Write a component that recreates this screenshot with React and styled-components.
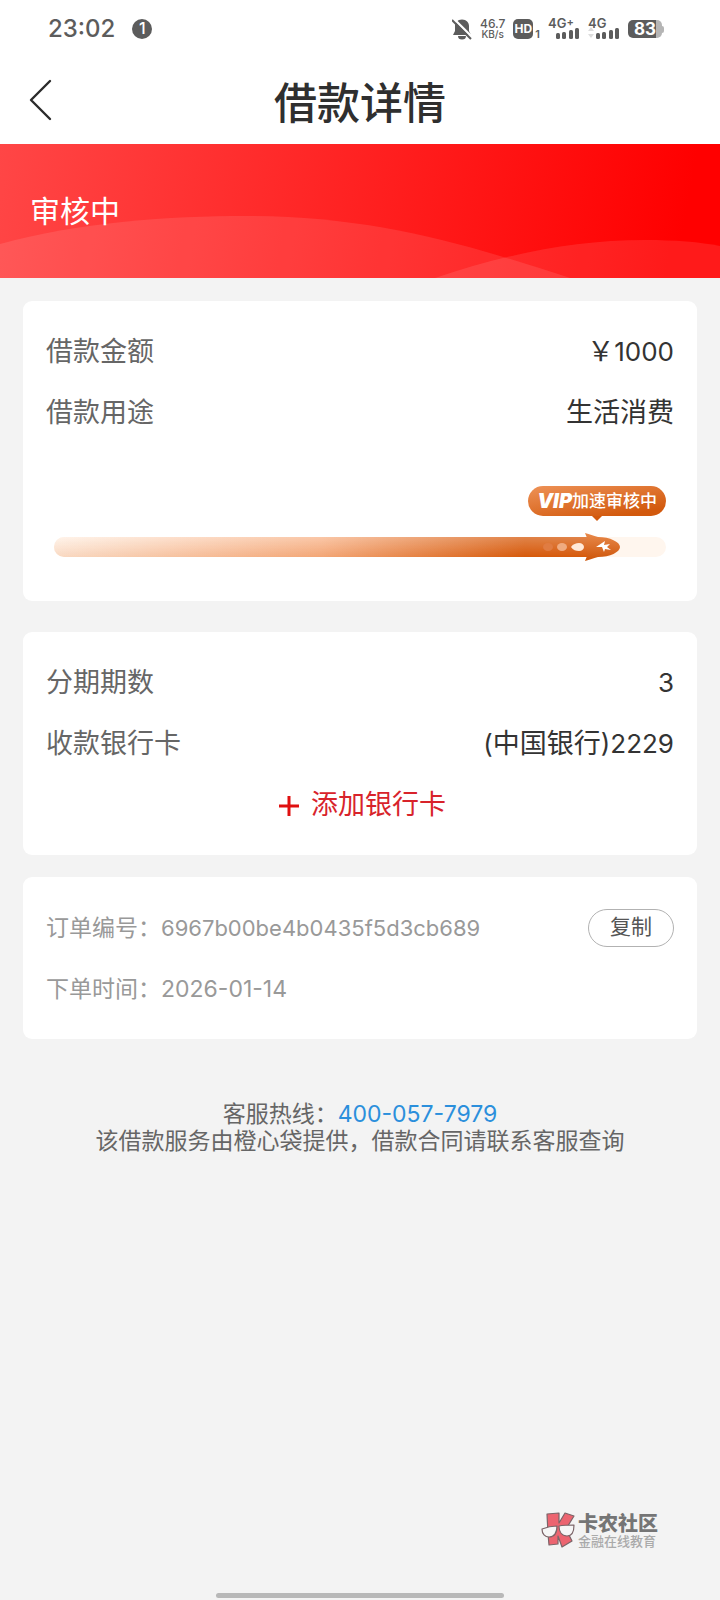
import React from 'react'
import styled, { createGlobalStyle } from 'styled-components'

const App = () => {
  return (
    <>
      <GlobalStyle />
      <Page>
        <StatusBar />
        <Header>
          <BackButton type="button" aria-label="返回">
            <svg width="24" height="44" viewBox="0 0 24 44">
              <path d="M21 3 L2 22 L21 41" fill="none" stroke="#2b2b2b" strokeWidth="2.4" strokeLinecap="round" strokeLinejoin="round" />
            </svg>
          </BackButton>
          <Title>借款详情</Title>
        </Header>
        <Banner>
          <BannerWaves />
          <BannerText>审核中</BannerText>
        </Banner>
        <Main>
          <Card>
            <Row>
              <Label>借款金额</Label>
              <Value>￥<Num>1000</Num></Value>
            </Row>
            <Row>
              <Label>借款用途</Label>
              <Value>生活消费</Value>
            </Row>
            <ReviewProgress percent={93} />
          </Card>
          <Card $gap={31}>
            <Row>
              <Label>分期期数</Label>
              <Value><Num>3</Num></Value>
            </Row>
            <Row>
              <Label>收款银行卡</Label>
              <Value><Num>(</Num>中国银行<Num>)2229</Num></Value>
            </Row>
            <AddCard type="button">
              <svg width="22" height="22" viewBox="0 0 22 22">
                <path d="M11 1V21M1 11H21" stroke="#e01010" strokeWidth="3" />
              </svg>
              添加银行卡
            </AddCard>
          </Card>
          <Card $gap={22}>
            <Row>
              <Meta>订单编号：<OrderNo>6967b00be4b0435f5d3cb689</OrderNo></Meta>
              <CopyButton type="button">复制</CopyButton>
            </Row>
            <Row>
              <Meta>下单时间：2026-01-14</Meta>
            </Row>
          </Card>
          <Service>
            <p>客服热线：<Phone href="tel:400-057-7979">400-057-7979</Phone></p>
            <p>该借款服务由橙心袋提供，借款合同请联系客服查询</p>
          </Service>
        </Main>
        <Watermark>
          <WatermarkLogo />
          <div>
            <Brand>卡农社区</Brand>
            <Slogan>金融在线教育</Slogan>
          </div>
        </Watermark>
        <HomeIndicator />
      </Page>
    </>
  )
}

export default App

const StatusBar = () => (
  <Status>
    <Clock>23:02</Clock>
    <Notice>1</Notice>
    <StatusIcons>
      <svg width="20" height="22" viewBox="0 0 20 22">
        <path d="M10 1.500c4.500 0 7 3 7 6.500v5l2 4H1l2-4V8c0-3.500 2.500-6.500 7-6.500z" fill="#5c5c5c" />
        <path d="M6 18h8a4 3.500 0 0 1-8 0z" fill="#5c5c5c" />
        <path d="M2 1L20 19" stroke="#fff" strokeWidth="2.400" />
        <path d="M0 2L19 21" stroke="#5c5c5c" strokeWidth="2" />
      </svg>
      <Speed>
        <span>46.7</span>
        <small>KB/s</small>
      </Speed>
      <Hd>
        <b>HD</b>
        <span>1</span>
      </Hd>
      <Signal label="4G" plus />
      <Signal label="4G" idle />
      <Battery>
        <b>83</b>
      </Battery>
    </StatusIcons>
  </Status>
)

const Signal = ({ label, plus, idle }) => (
  <SignalBox>
    <span>{label}{plus && <sup>+</sup>}</span>
    <svg width="32" height="12" viewBox="0 0 32 12">
      {idle && <path d="M3 0l3 4H0zM3 11l3-4H0z" fill="#dcdcdc" />}
      <g fill="#5c5c5c">
        <rect x="8" y="6" width="4" height="6" rx="1.500" />
        <rect x="14" y="5" width="4" height="7" rx="1.500" />
        <rect x="21" y="3" width="4" height="9" rx="1.500" />
        <rect x="27" y="1" width="4" height="11" rx="1.500" />
      </g>
    </svg>
  </SignalBox>
)

const BannerWaves = () => (
  <Waves viewBox="0 0 720 134" preserveAspectRatio="none" aria-hidden="true">
    <path d="M0 100C80 78 170 72 245 72C370 72 460 98 570 134H0z" fill="#fff" fillOpacity="0.1" />
    <path d="M435 134C500 112 570 96 645 96C675 96 700 98 720 102V134z" fill="#fff" fillOpacity="0.1" />
  </Waves>
)

const ReviewProgress = ({ percent }) => (
  <Progress>
    <Bubble>
      <Vip>VIP</Vip>加速审核中
    </Bubble>
    <Track>
      <Fill style={{ width: `${percent}%` }}>
        <svg width="80" height="30" viewBox="0 0 80 30">
          <defs>
            <linearGradient id="rocket" x1="0" y1="0" x2="0" y2="1">
              <stop offset="0" stopColor="#e98a4c" />
              <stop offset="1" stopColor="#cd5408" />
            </linearGradient>
          </defs>
          <ellipse cx="5" cy="15" rx="5" ry="4" fill="#e07c42" />
          <ellipse cx="19" cy="15" rx="5" ry="4" fill="#efab80" />
          <path d="M28 15c2-3 5-4 8-4 3 0 5 2 5 4s-2 4-5 4c-3 0-6-1-8-4z" fill="#ffe9d8" />
          <path d="M42 1C47 2 50 4 55 5C67 5 77 10 77 15C77 20 67 25 55 25C50 26 47 28 42 29L44 24V6z" fill="url(#rocket)" />
          <path d="M53 15L62 9L61 13L67 12L64 15L68 18L62 17L61 20L59 15z" fill="#fff" />
        </svg>
      </Fill>
    </Track>
  </Progress>
)

const WatermarkLogo = () => (
  <svg width="34" height="36" viewBox="0 0 34 36">
    <g stroke="#7b6468" strokeWidth="1.200" strokeLinejoin="round">
      <path d="M6 2L18 1L18 11L24 1L33 4L25 17L31 29L21 35L17 24L17 32L8 33L7 22z" fill="#ec6470" />
      <path d="M1 17C6 15 10 14 16 14C16 21 13 25 8 25C4 25 1 22 1 17z" fill="#f6f6f6" />
      <path d="M18 14C23 13 28 13 33 13C33 20 31 24 26 24C21 24 18 20 18 14z" fill="#f6f6f6" />
    </g>
  </svg>
)

const GlobalStyle = createGlobalStyle`
  * {
    box-sizing: border-box;
  }
  body {
    margin: 0;
    background: #f3f3f3;
    font-family: Inter, "Noto Sans CJK SC", sans-serif;
    line-height: 1.2;
  }
  p, h1 {
    margin: 0;
  }
  button {
    font-family: inherit;
    line-height: inherit;
    cursor: pointer;
  }
`
const Page = styled.div`
  display: flex;
  flex-direction: column;
  min-height: 100vh;
`
const Status = styled.div`
  display: flex;
  align-items: center;
  height: 58px;
  padding: 0 56px 0 48px;
  background: #fff;
  color: #5c5c5c;
`
const Clock = styled.span`
  font-size: 24px;
  font-weight: 500;
`
const Notice = styled.span`
  display: flex;
  justify-content: center;
  align-items: center;
  width: 20px;
  height: 20px;
  margin-left: 17px;
  border-radius: 50%;
  background: #5c5c5c;
  color: #fff;
  font-size: 16px;
  font-weight: 500;
`
const StatusIcons = styled.div`
  display: flex;
  align-items: center;
  gap: 8px;
  margin-left: auto;
`
const Speed = styled.div`
  display: flex;
  flex-direction: column;
  align-items: center;
  font-size: 12px;
  font-weight: 500;
  line-height: 11px;

  small {
    font-size: 10px;
  }
`
const Hd = styled.div`
  display: flex;
  align-items: flex-end;
  gap: 2px;

  b {
    width: 20px;
    border-radius: 5px;
    background: #5c5c5c;
    color: #fff;
    font-size: 12px;
    line-height: 20px;
    text-align: center;
  }
  span {
    font-size: 11px;
    font-weight: 600;
    line-height: 10px;
  }
`
const SignalBox = styled.div`
  display: flex;
  flex-direction: column;
  height: 20px;
  font-size: 13px;
  font-weight: 600;
  line-height: 8px;

  sup {
    font-size: 11px;
    line-height: 0;
    vertical-align: 2px;
  }
`
const Battery = styled.div`
  display: flex;
  align-items: center;

  b {
    width: 34px;
    border-radius: 5px;
    background: linear-gradient(90deg, #5c5c5c 83%, #b5b5b5 83%);
    color: #fff;
    font-size: 17px;
    line-height: 18px;
    text-align: center;
  }
  &::after {
    content: '';
    width: 2px;
    height: 7px;
    border-radius: 0 2px 2px 0;
    background: #b5b5b5;
  }
`
const Header = styled.header`
  display: grid;
  grid-template-columns: 56px 1fr 56px;
  align-items: center;
  height: 86px;
  background: #fff;
`
const BackButton = styled.button`
  display: flex;
  justify-content: flex-end;
  padding: 0 3px 2px;
  border: none;
  background: none;
`
const Title = styled.h1`
  padding-top: 6px;
  color: #2f2f2f;
  font-size: 43px;
  font-weight: 500;
  text-align: center;
`
const Banner = styled.section`
  position: relative;
  display: flex;
  align-items: center;
  height: 134px;
  padding: 0 30px;
  background: linear-gradient(100deg, #ff4646, #ff0000 94%);
`
const Waves = styled.svg`
  position: absolute;
  inset: 0;
  width: 100%;
  height: 100%;
`
const BannerText = styled.p`
  position: relative;
  color: #fff;
  font-size: 30px;
`
const Main = styled.main`
  padding: 23px 23px 0;
`
const Card = styled.section`
  margin-top: ${({ $gap }) => $gap || 0}px;
  padding: 20px 23px;
  border-radius: 9px;
  background: #fff;
`
const Row = styled.div`
  display: flex;
  justify-content: space-between;
  align-items: center;
  height: 61px;
`
const RowText = styled.span`
  padding-top: 2px;
  font-size: 27px;
`
const Label = styled(RowText)`
  color: #666;
`
const Value = styled(RowText)`
  color: #333;
`
const Num = styled.span`
  font-size: 26px;
`
const AddCard = styled.button`
  display: flex;
  justify-content: center;
  align-items: center;
  gap: 11px;
  width: 100%;
  height: 61px;
  padding: 2px 0 0 4px;
  border: none;
  background: none;
  color: #d8232b;
  font-size: 27px;
`
const Meta = styled(RowText)`
  color: #999;
  font-size: 23px;
`
const OrderNo = styled.span`
  font-size: 22px;
`
const CopyButton = styled.button`
  width: 86px;
  height: 38px;
  padding: 0 0 2px;
  border: 1px solid #b2b2b2;
  border-radius: 19px;
  background: #fff;
  color: #555;
  font-size: 21px;
`
const Progress = styled.div`
  display: flex;
  flex-direction: column;
  gap: 21px;
  padding: 43px 8px 24px;
`
const Bubble = styled.div`
  position: relative;
  display: flex;
  align-items: center;
  align-self: flex-end;
  height: 30px;
  padding: 0 9px;
  border-radius: 15px;
  background: linear-gradient(170deg, #ee9257, #d2590d 85%);
  color: #fff;
  font-size: 17px;
  font-weight: 500;

  &::after {
    content: '';
    position: absolute;
    top: 100%;
    left: 50%;
    border: 5px solid transparent;
    border-top-color: #d2590d;
    border-bottom: none;
    transform: translateX(-50%);
  }
`
const Vip = styled.b`
  font-size: 20px;
  font-style: italic;
  font-weight: 900;
`
const Track = styled.div`
  height: 20px;
  border-radius: 10px;
  background: #fff6ee;
`
const Fill = styled.div`
  display: flex;
  align-items: center;
  height: 20px;

  /* the bar runs on under the dots and stops at the rocket's tail */
  &::before {
    content: '';
    flex: 1;
    height: 20px;
    margin-right: -46px;
    border-radius: 10px 0 0 10px;
    background:
      linear-gradient(180deg, rgba(255, 255, 255, 0.25), rgba(214, 84, 0, 0.15)),
      linear-gradient(90deg, #fff0e4, #f8b48a 50%, #d65a0c 88%);
  }
  svg {
    position: relative;
    flex: none;
  }
`
const Service = styled.footer`
  margin-top: 62px;
  color: #666;
  font-size: 23px;
  line-height: 27px;
  text-align: center;
`
const Phone = styled.a`
  color: #2b8fdc;
  text-decoration: none;
`
const Watermark = styled.div`
  display: flex;
  align-items: center;
  align-self: flex-end;
  gap: 3px;
  margin-top: auto;
  padding: 0 62px 45px 0;
`
const Brand = styled.p`
  color: #757575;
  font-size: 20px;
  font-weight: 900;
  line-height: 22px;
`
const Slogan = styled.p`
  color: #aaa;
  font-size: 13px;
  font-weight: 500;
  line-height: 12px;
`
const HomeIndicator = styled.div`
  align-self: center;
  width: 40%;
  height: 5px;
  margin-bottom: 2px;
  border-radius: 3px;
  background: #b8b8b8;
`
